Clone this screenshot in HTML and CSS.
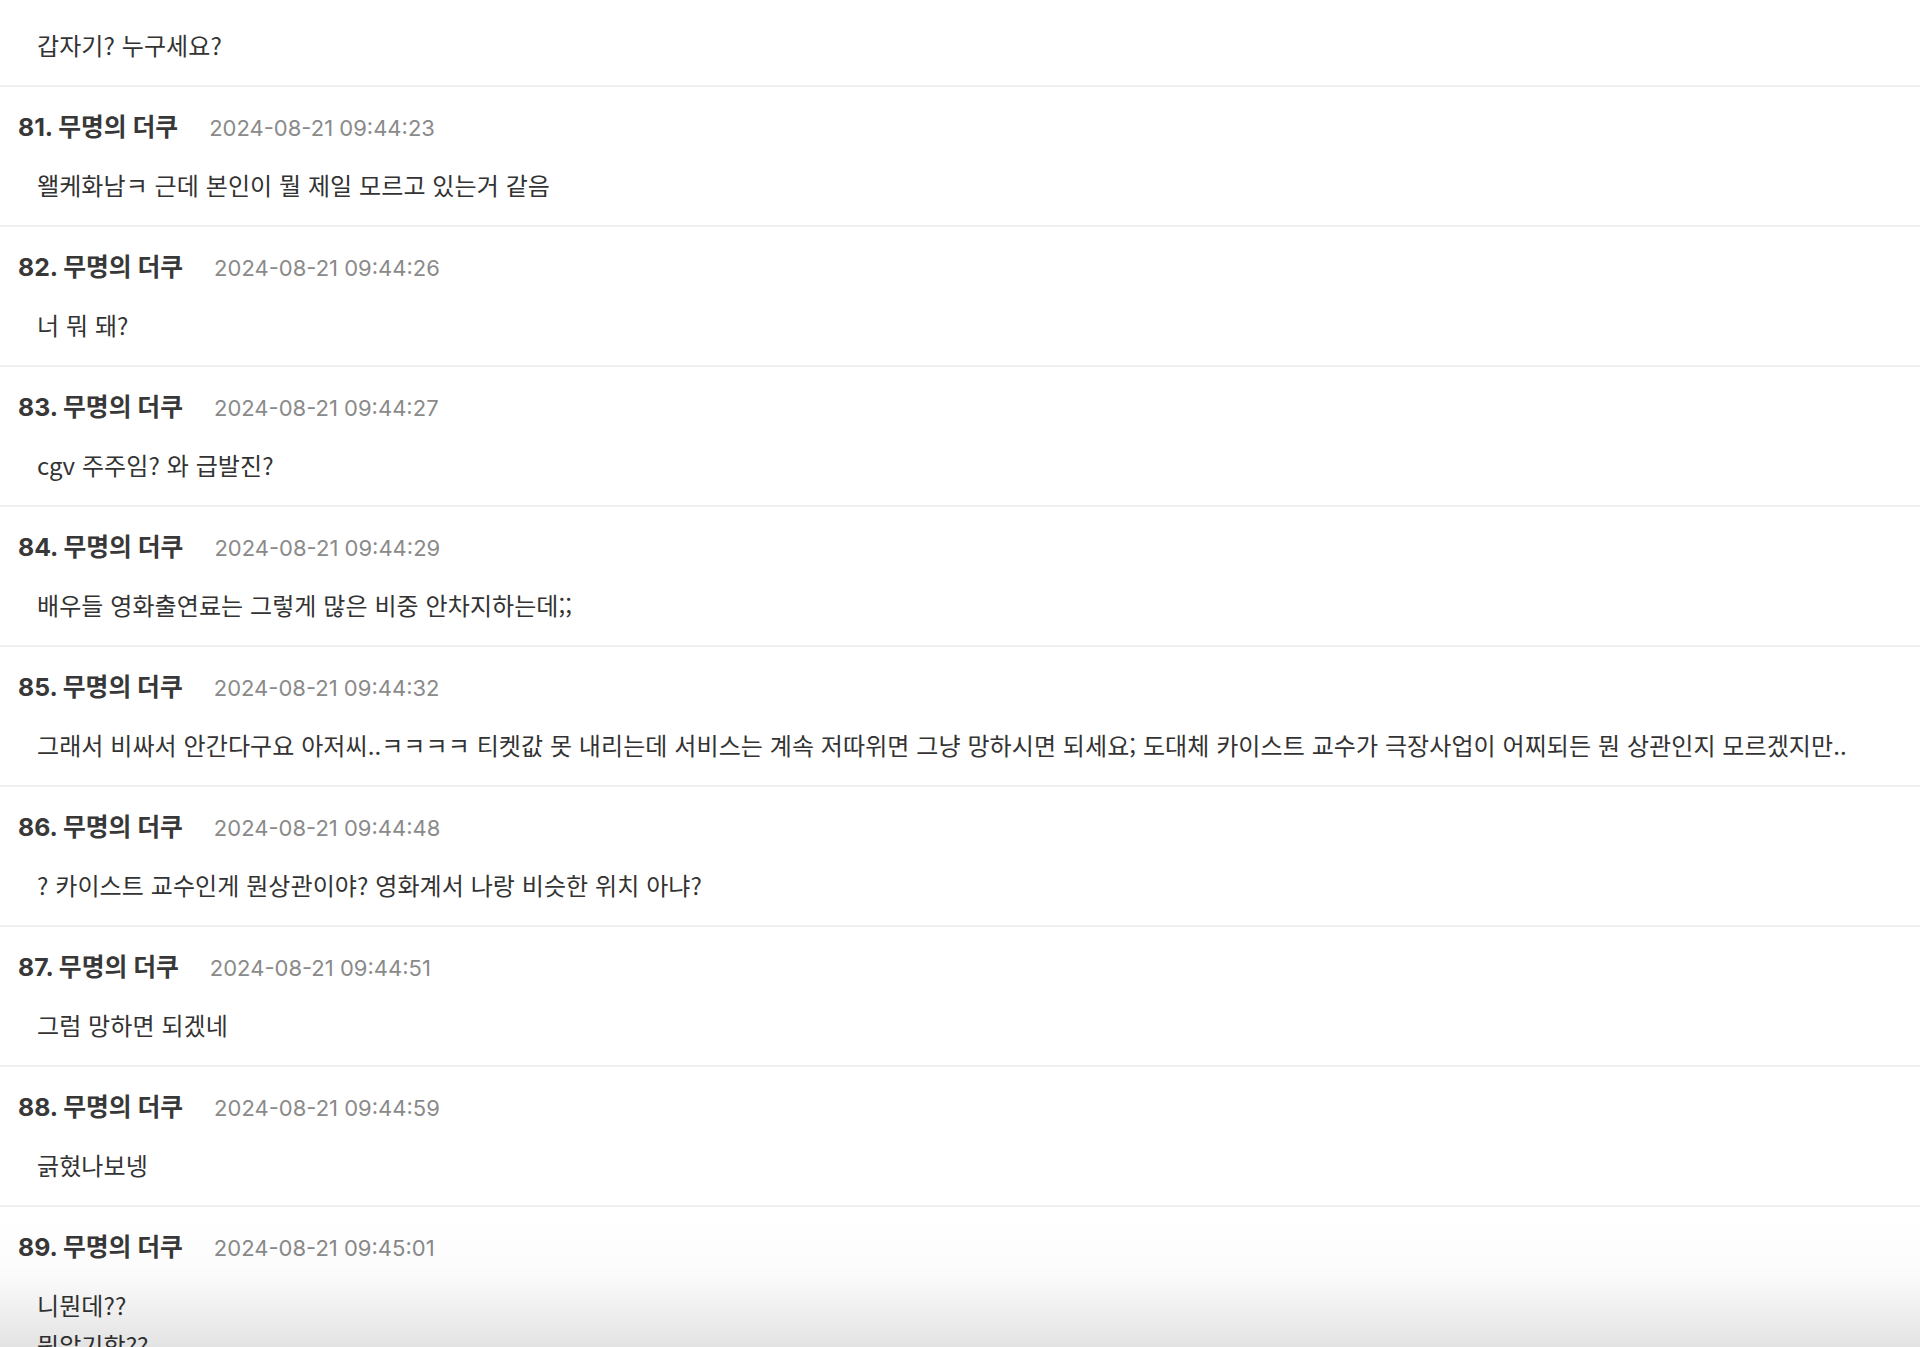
FILE: index.html
```html
<!DOCTYPE html>
<html lang="ko">
<head>
<meta charset="utf-8">
<title>댓글</title>
<link rel="stylesheet" href="styles.css">
</head>
<body>
<ul class="comments">
  <li class="comment partial">
    <p class="comment-body">갑자기? 누구세요?</p>
  </li>
  <li class="comment">
    <div class="comment-head"><span class="comment-author">81. 무명의 더쿠</span><span class="comment-date">2024-08-21 09:44:23</span></div>
    <p class="comment-body">왤케화남ㅋ 근데 본인이 뭘 제일 모르고 있는거 같음</p>
  </li>
  <li class="comment">
    <div class="comment-head"><span class="comment-author">82. 무명의 더쿠</span><span class="comment-date">2024-08-21 09:44:26</span></div>
    <p class="comment-body">너 뭐 돼?</p>
  </li>
  <li class="comment">
    <div class="comment-head"><span class="comment-author">83. 무명의 더쿠</span><span class="comment-date">2024-08-21 09:44:27</span></div>
    <p class="comment-body">cgv 주주임? 와 급발진?</p>
  </li>
  <li class="comment">
    <div class="comment-head"><span class="comment-author">84. 무명의 더쿠</span><span class="comment-date">2024-08-21 09:44:29</span></div>
    <p class="comment-body">배우들 영화출연료는 그렇게 많은 비중 안차지하는데;;</p>
  </li>
  <li class="comment">
    <div class="comment-head"><span class="comment-author">85. 무명의 더쿠</span><span class="comment-date">2024-08-21 09:44:32</span></div>
    <p class="comment-body">그래서 비싸서 안간다구요 아저씨..ㅋㅋㅋㅋ 티켓값 못 내리는데 서비스는 계속 저따위면 그냥 망하시면 되세요; 도대체 카이스트 교수가 극장사업이 어찌되든 뭔 상관인지 모르겠지만..</p>
  </li>
  <li class="comment">
    <div class="comment-head"><span class="comment-author">86. 무명의 더쿠</span><span class="comment-date">2024-08-21 09:44:48</span></div>
    <p class="comment-body">? 카이스트 교수인게 뭔상관이야? 영화계서 나랑 비슷한 위치 아냐?</p>
  </li>
  <li class="comment">
    <div class="comment-head"><span class="comment-author">87. 무명의 더쿠</span><span class="comment-date">2024-08-21 09:44:51</span></div>
    <p class="comment-body">그럼 망하면 되겠네</p>
  </li>
  <li class="comment">
    <div class="comment-head"><span class="comment-author">88. 무명의 더쿠</span><span class="comment-date">2024-08-21 09:44:59</span></div>
    <p class="comment-body">긁혔나보넹</p>
  </li>
  <li class="comment">
    <div class="comment-head"><span class="comment-author">89. 무명의 더쿠</span><span class="comment-date">2024-08-21 09:45:01</span></div>
    <p class="comment-body">니뭔데??<br>뭔알기함??</p>
  </li>
</ul>
<div class="bottom-fade"></div>
</body>
</html>
```

FILE: styles.css
```css
html, body {
  margin: 0;
  padding: 0;
  background: #fff;
}

body {
  font-family: Inter, "Noto Sans CJK KR", sans-serif;
  color: #333;
  overflow: hidden;
}

.comments {
  list-style: none;
  margin: 0;
  padding: 0;
}

.comment {
  border-top: 2px solid #efefef;
  padding: 20px 0 20px;
}

.comment.partial {
  border-top: 0;
  padding-top: 25px;
}

.comment-head {
  display: flex;
  align-items: baseline;
  gap: 31px;
  padding-left: 18px;
  height: 40px;
  line-height: 40px;
  margin-bottom: 18px;
}

.comment-author {
  font-family: Inter, "Noto Sans CJK KR", sans-serif;
  font-weight: 700;
  font-size: 24.8px;
  color: #383838;
}

.comment-date {
  font-family: Inter, sans-serif;
  font-size: 22px;
  color: #8a8a8a;
}

.comment-body {
  margin: 0;
  padding-left: 37px;
  font-family: "Noto Sans CJK KR", sans-serif;
  font-size: 24px;
  letter-spacing: 0.08px;
  line-height: 40px;
  color: #333;
  white-space: nowrap;
}

.bottom-fade {
  position: fixed;
  left: 0;
  right: 0;
  bottom: 0;
  height: 130px;
  pointer-events: none;
  background: linear-gradient(to bottom, rgba(0, 0, 0, 0) 0%, rgba(0, 0, 0, 0.015) 45%, rgba(0, 0, 0, 0.11) 100%);
}
```
